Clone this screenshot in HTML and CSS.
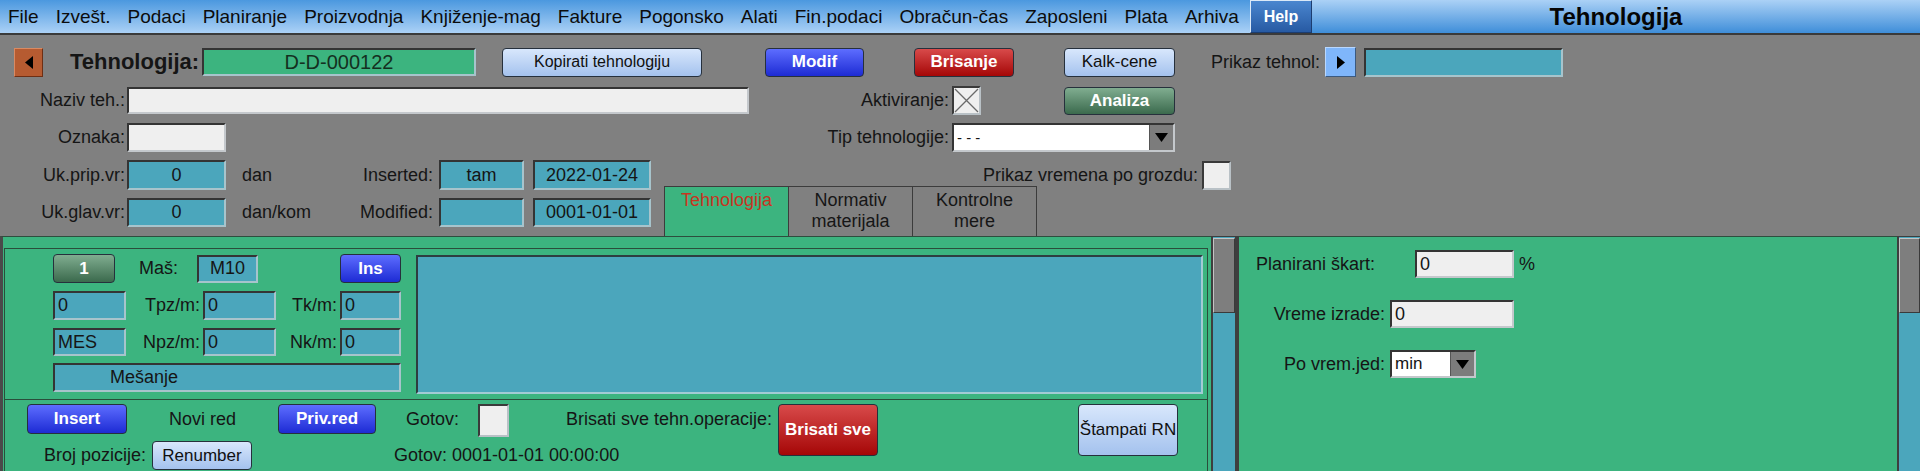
FILE: index.html
```html
<!DOCTYPE html>
<html lang="sr">
<head>
<meta charset="utf-8">
<title>Tehnologija</title>
<link rel="stylesheet" href="styles.css">
</head>
<body>
<div class="menubar">
  <nav class="menu">
    <span>File</span><span>Izvešt.</span><span>Podaci</span><span>Planiranje</span><span>Proizvodnja</span><span>Knjiženje-mag</span><span>Fakture</span><span>Pogonsko</span><span>Alati</span><span>Fin.podaci</span><span>Obračun-čas</span><span>Zaposleni</span><span>Plata</span><span>Arhiva</span>
  </nav>
  <div class="help">Help</div>
  <div class="title">Tehnologija</div>
</div>

<section class="head">
  <div class="row r1">
    <div class="navbtn back"><svg width="8" height="13" viewBox="0 0 8 13"><path d="M8 0V13L0 6.5Z"/></svg></div>
    <div class="biglbl">Tehnologija:</div>
    <div class="fld green code">D-D-000122</div>
    <div class="btn btn-light kop">Kopirati tehnologiju</div>
    <div class="btn btn-blue modif">Modif</div>
    <div class="btn btn-red bris">Brisanje</div>
    <div class="btn btn-light kalk">Kalk-cene</div>
    <div class="lbl prikaz-lbl">Prikaz tehnol:</div>
    <div class="navbtn fwd"><svg width="8" height="13" viewBox="0 0 8 13"><path d="M0 0V13L8 6.5Z"/></svg></div>
    <div class="fld teal prikaz-fld"></div>
  </div>

  <div class="row r2">
    <div class="lbl lblcol">Naziv teh.:</div>
    <div class="fld light naziv"></div>
    <div class="lbl akt-lbl">Aktiviranje:</div>
    <div class="chk akt-chk"><svg width="25" height="25" viewBox="0 0 25 25"><path d="M1 1L24 24M24 1L1 24" stroke="#6a6a6a" stroke-width="1.3" fill="none"/></svg></div>
    <div class="btn btn-green analiza">Analiza</div>
  </div>

  <div class="row r3">
    <div class="lbl lblcol">Oznaka:</div>
    <div class="fld light oznaka"></div>
    <div class="lbl tip-lbl">Tip tehnologije:</div>
    <div class="sel tip-sel">
      <span class="sel-txt tip-txt">- - -</span>
      <span class="sel-btn"><svg width="13" height="9" viewBox="0 0 13 9"><path d="M0 0H13L6.5 9Z"/></svg></span>
    </div>
  </div>

  <div class="lower">
    <div class="lower-left">
      <div class="row r4">
        <div class="lbl lblcol">Uk.prip.vr:</div>
        <div class="fld teal small c">0</div>
        <div class="lbl unit">dan</div>
        <div class="lbl inslbl">Inserted:</div>
        <div class="fld teal who c">tam</div>
        <div class="fld teal date c">2022-01-24</div>
      </div>
      <div class="row r5">
        <div class="lbl lblcol">Uk.glav.vr:</div>
        <div class="fld teal small c">0</div>
        <div class="lbl unit">dan/kom</div>
        <div class="lbl inslbl">Modified:</div>
        <div class="fld teal who c"></div>
        <div class="fld teal date c">0001-01-01</div>
      </div>
    </div>
    <div class="lower-right">
      <div class="row pv-row">
        <div class="lbl">Prikaz vremena po grozdu:</div>
        <div class="chk pv-chk"></div>
      </div>
      <div class="tabs">
        <div class="tab active">Tehnologija</div>
        <div class="tab">Normativ<br>materijala</div>
        <div class="tab">Kontrolne<br>mere</div>
      </div>
    </div>
  </div>
</section>

<main class="work">
  <div class="pane-left">
    <div class="opbox">
      <div class="optop">
        <div class="opfields">
          <div class="row ra">
            <div class="btn btn-green b1">1</div>
            <div class="lbl mas">Maš:</div>
            <div class="fld teal m10 c">M10</div>
            <div class="btn btn-blue ins">Ins</div>
          </div>
          <div class="row rb">
            <div class="fld teal f73 l">0</div>
            <div class="lbl l74">Tpz/m:</div>
            <div class="fld teal f73 l gap3">0</div>
            <div class="lbl l61">Tk/m:</div>
            <div class="fld teal f61 l gap3">0</div>
          </div>
          <div class="row rc">
            <div class="fld teal f73 l">MES</div>
            <div class="lbl l74">Npz/m:</div>
            <div class="fld teal f73 l gap3">0</div>
            <div class="lbl l61">Nk/m:</div>
            <div class="fld teal f61 l gap3">0</div>
          </div>
          <div class="row rd">
            <div class="fld teal mesanje">Mešanje</div>
          </div>
        </div>
        <div class="fld teal textarea"></div>
      </div>
      <div class="opbottom">
        <div class="ob-left">
          <div class="row ob1">
            <div class="btn btn-blue insert">Insert</div>
            <div class="lbl novi">Novi red</div>
            <div class="btn btn-blue priv">Priv.red</div>
            <div class="lbl gotov">Gotov:</div>
            <div class="chk gotov-chk"></div>
            <div class="lbl brisall-lbl">Brisati sve tehn.operacije:</div>
          </div>
          <div class="row ob2">
            <div class="lbl broj">Broj pozicije:</div>
            <div class="btn btn-light renum">Renumber</div>
            <div class="lbl gotov-dt">Gotov: 0001-01-01 00:00:00</div>
          </div>
        </div>
        <div class="btn btn-red brisall">Brisati sve</div>
        <div class="btn btn-light stampati">Štampati RN</div>
      </div>
    </div>
  </div>
  <div class="vscroll"><div class="thumb"></div></div>
  <div class="pane-right">
    <div class="row rp1">
      <div class="lbl skart-lbl">Planirani škart:</div>
      <div class="fld light skart l">0</div>
      <div class="lbl pct">%</div>
    </div>
    <div class="row rp2">
      <div class="lbl rp-lbl">Vreme izrade:</div>
      <div class="fld light vreme l">0</div>
    </div>
    <div class="row rp3">
      <div class="lbl rp-lbl">Po vrem.jed:</div>
      <div class="sel jed-sel">
        <span class="sel-txt">min</span>
        <span class="sel-btn"><svg width="13" height="9" viewBox="0 0 13 9"><path d="M0 0H13L6.5 9Z"/></svg></span>
      </div>
    </div>
  </div>
  <div class="vscroll vscroll-r"><div class="thumb"></div></div>
</main>
</body>
</html>
```

FILE: styles.css
```css
* { box-sizing: border-box; margin: 0; padding: 0; }
html, body { width: 1920px; height: 471px; overflow: hidden; }
body {
  background: #808080;
  font-family: "Liberation Sans", Arial, sans-serif;
  font-size: 18px;
  color: #151515;
}

/* ---------- menu bar ---------- */
.menubar { display: flex; height: 35px; border-bottom: 2px solid #3a3a3a; }
.menu {
  width: 1250px; display: flex; align-items: center; gap: 17px; padding-left: 8px;
  background: linear-gradient(#4b98df, #abd1f6);
  font-size: 19px; color: #0c0c0c; white-space: nowrap;
}
.help {
  width: 62px; display: flex; align-items: center; justify-content: center;
  background: linear-gradient(#4a86cf, #275aa3);
  border: 1px solid; border-color: #dbe9f8 #1c3d70 #1c3d70 #dbe9f8;
  color: #fff; font-weight: bold; font-size: 16px;
}
.title {
  flex: 1; display: flex; align-items: center; justify-content: center;
  background: linear-gradient(#abd1f6, #3f8ed9);
  font-weight: bold; font-size: 24px; color: #050505;
}

/* ---------- generic ---------- */
.row { display: flex; align-items: center; }
.lbl { white-space: nowrap; }
.fld {
  display: flex; align-items: center; white-space: nowrap;
  border: 2px solid; border-color: #343434 #a7c4cc #a7c4cc #343434;
}
.fld.c { justify-content: center; }
.fld.l { padding-left: 3px; }
.teal { background: #4ba6bc; }
.light { background: #efefef; border-color: #343434 #c4c8cc #c4c8cc #343434; }
.green { background: #3cb47f; }
.chk {
  background: #efefef;
  border: 2px solid; border-color: #3a3a3a #b9c1c6 #b9c1c6 #3a3a3a;
  display: flex; align-items: center; justify-content: center;
}
.btn {
  display: flex; align-items: center; justify-content: center; white-space: nowrap;
  border: 1px solid #26303c; border-radius: 4px; font-size: 17px;
}
.btn-light { background: linear-gradient(#d8e7fc, #a4c2ee); color: #101010; }
.btn-blue { background: linear-gradient(#5d6dff, #1d2bd4); color: #fff; font-weight: bold; }
.btn-red { background: linear-gradient(#d84a4a, #a50707); color: #fff; font-weight: bold; }
.btn-green { background: linear-gradient(#80ad90, #3b6a4d); color: #fff; font-weight: bold; }
.sel {
  display: flex; background: #fff;
  border: 2px solid; border-color: #343434 #c4c8cc #c4c8cc #343434;
}
.sel-txt { flex: 1; display: flex; align-items: center; padding-left: 3px; font-size: 17px; }
.sel-btn {
  width: 24px; background: #7c7c7c; border-left: 1px solid #555;
  display: flex; align-items: center; justify-content: center;
}

/* ---------- header ---------- */
.head { padding-top: 12px; }
.r1 { height: 30px; }
.navbtn { display: flex; align-items: center; justify-content: center; }
.back {
  margin-left: 14px; width: 29px; height: 29px;
  background: #b65b31; border: 1px solid; border-color: #d98a62 #6e2f14 #6e2f14 #d98a62;
}
.fwd {
  margin-left: 5px; width: 31px; height: 30px;
  background: #7fb6fb; border: 1px solid; border-color: #b9d8ff #3b5a80 #3b5a80 #b9d8ff;
}
.biglbl { margin-left: 27px; width: 127px; font-weight: bold; font-size: 22px; white-space: nowrap; }
.code { margin-left: 5px; width: 274px; height: 28px; justify-content: center; font-size: 20px; color: #14301f; }
.kop { margin-left: 26px; width: 200px; height: 29px; font-size: 16px; }
.modif { margin-left: 63px; width: 99px; height: 29px; }
.bris { margin-left: 50px; width: 100px; height: 29px; }
.kalk { margin-left: 50px; width: 111px; height: 29px; }
.prikaz-lbl { margin-left: 36px; width: 109px; text-align: right; }
.prikaz-fld { margin-left: 8px; width: 199px; height: 29px; }

.r2 { margin-top: 9px; height: 29px; }
.lblcol { width: 125px; text-align: right; }
.naziv { margin-left: 2px; width: 622px; height: 27px; }
.akt-lbl { margin-left: 99px; width: 101px; text-align: right; }
.akt-chk { margin-left: 3px; width: 29px; height: 29px; }
.analiza { margin-left: 83px; width: 111px; height: 28px; }

.r3 { margin-top: 7px; height: 30px; }
.oznaka { margin-left: 2px; width: 99px; height: 29px; }
.tip-lbl { margin-left: 600px; width: 123px; text-align: right; }
.tip-sel { margin-left: 3px; width: 223px; height: 29px; }
.tip-txt { font-size: 15px; }

.lower { display: flex; margin-top: 8px; height: 76px; }
.lower-left { width: 651px; }
.r4 { height: 30px; }
.r5 { margin-top: 8px; height: 29px; }
.small { margin-left: 2px; width: 99px; height: 100%; }
.unit { margin-left: 16px; width: 100px; }
.inslbl { width: 91px; text-align: right; }
.who { margin-left: 6px; width: 85px; height: 100%; }
.date { margin-left: 9px; width: 118px; height: 100%; }
.lower-right { width: 580px; display: flex; flex-direction: column; }
.pv-row { height: 30px; justify-content: flex-end; }
.pv-chk { margin-left: 4px; width: 29px; height: 29px; }
.tabs { display: flex; margin-top: -4px; padding-left: 13px; height: 50px; }
.tab {
  width: 125px; height: 50px; margin-right: -1px;
  border: 1px solid #3c3c3c; border-bottom: none;
  text-align: center; line-height: 21px; padding-top: 3px; color: #161616;
}
.tab.active { background: #3cb47f; color: #c8341f; }

/* ---------- work area ---------- */
.work { display: flex; height: 235px; }
.pane-left {
  width: 1211px; background: #3cb47f;
  border-left: 3px solid #4a4a4a; border-top: 1px solid #2d4e3e;
}
.opbox {
  margin: 11px 0 0 1px; width: 1204px; height: 240px;
  border: 1px solid #2a4d3b;
}
.optop { display: flex; height: 150px; padding: 5px 4px 0 48px; }
.opfields { width: 348px; }
.ra { height: 29px; }
.rb { margin-top: 8px; height: 29px; }
.rc { margin-top: 8px; height: 28px; }
.rd { margin-top: 7px; height: 29px; }
.b1 { width: 62px; height: 29px; }
.mas { margin-left: 24px; width: 58px; }
.m10 { width: 61px; height: 28px; }
.ins { margin-left: 82px; width: 61px; height: 29px; }
.f73 { width: 73px; height: 100%; }
.f61 { width: 61px; height: 100%; }
.gap3 { margin-left: 3px; }
.l74 { width: 74px; text-align: right; }
.l61 { width: 61px; text-align: right; }
.mesanje { width: 348px; height: 29px; padding-left: 55px; }
.textarea { margin-left: 15px; margin-top: 1px; flex: 1; height: 139px; border-color: #2e3d40 #a3cbd4 #a3cbd4 #2e3d40; }

.opbottom { display: flex; align-items: flex-start; border-top: 1px solid #2a4d3b; padding-top: 4px; }
.ob-left { width: 767px; }
.ob1 { height: 33px; align-items: flex-start; }
.ob1 .lbl { line-height: 30px; }
.insert { margin-left: 22px; width: 100px; height: 30px; }
.novi { margin-left: 42px; width: 67px; }
.priv { margin-left: 42px; width: 98px; height: 30px; }
.gotov { margin-left: 30px; width: 50px; }
.gotov-chk { margin-left: 22px; width: 31px; height: 33px; }
.brisall-lbl { margin-left: 55px; width: 208px; text-align: right; }
.ob2 { margin-top: 4px; height: 29px; }
.broj { margin-left: 39px; width: 103px; }
.renum { margin-left: 5px; width: 100px; height: 29px; }
.gotov-dt { margin-left: 142px; }
.brisall { margin-left: 6px; width: 100px; height: 52px; }
.stampati { margin-left: 200px; width: 100px; height: 52px; }

.vscroll {
  width: 26px; background: #4ba6bc;
  border-left: 2px solid #3e3e3e; border-right: 2px solid #3e3e3e; border-top: 1px solid #3e3e3e;
  padding-top: 1px;
}
.vscroll-r { width: 23px; border-right: none; }
.thumb {
  height: 75px; background: #7e7e7e;
  border: 1px solid; border-color: #c4c4c4 #3a3a3a #3a3a3a #c4c4c4;
}

.pane-right {
  width: 660px; background: #3cb47f;
  border-left: 2px solid #3e3e3e; border-top: 1px solid #2d4e3e;
}
.rp1 { margin-top: 13px; padding-left: 17px; height: 28px; }
.skart-lbl { width: 159px; }
.skart { width: 99px; height: 28px; }
.pct { margin-left: 5px; }
.rp2 { margin-top: 22px; height: 28px; }
.rp-lbl { width: 146px; text-align: right; }
.vreme { margin-left: 5px; width: 124px; height: 28px; }
.rp3 { margin-top: 22px; height: 28px; }
.jed-sel { margin-left: 5px; width: 86px; height: 28px; }
```
